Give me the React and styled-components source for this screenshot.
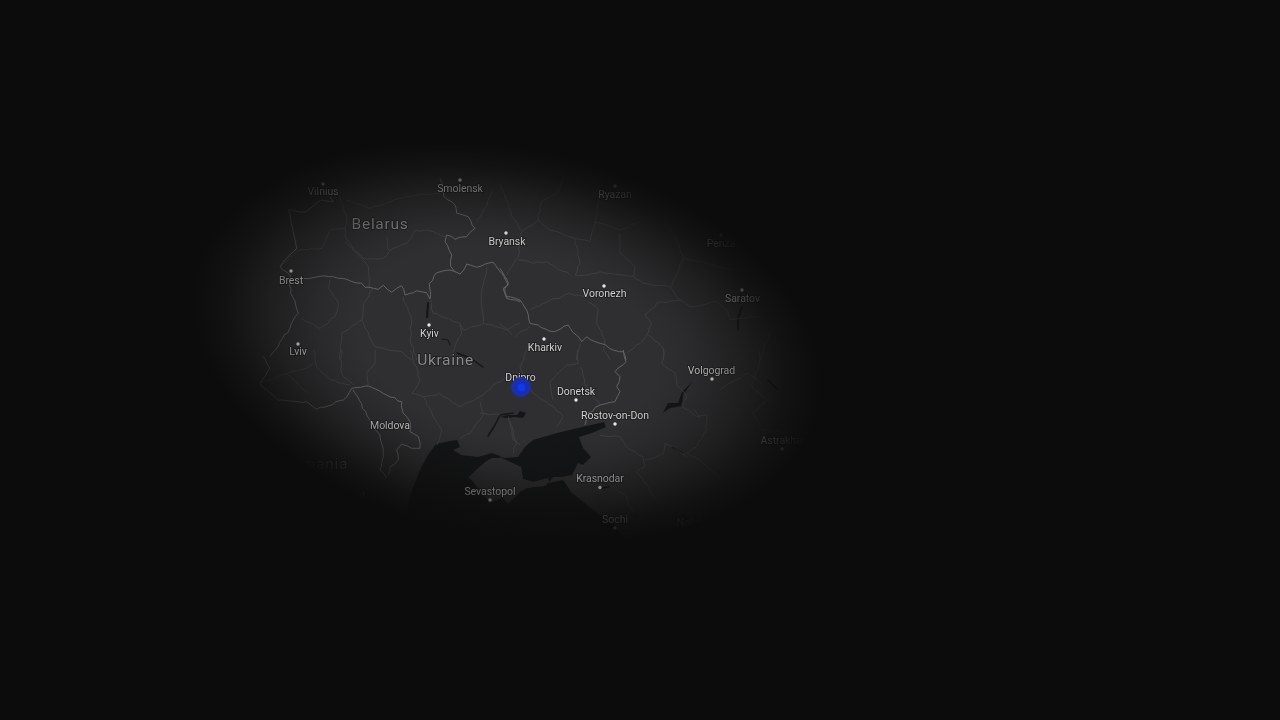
import React from "react";
import styled, { createGlobalStyle } from "styled-components";

const Global = createGlobalStyle`
  html, body { margin: 0; padding: 0; background: #0c0c0c; overflow: hidden; }
`;

const Stage = styled.main`
  position: relative;
  width: 1280px;
  height: 720px;
  overflow: hidden;
  background: #0c0c0c;
`;

const MapSvg = styled.svg`
  display: block;
  width: 1280px;
  height: 720px;
  filter: blur(0.5px);
`;

const Vignette = styled.div`
  position: absolute;
  left: -993px;
  top: -1157px;
  width: 3000px;
  height: 3000px;
  pointer-events: none;
  transform: rotate(12deg);
  background: radial-gradient(
    ellipse 318px 194px at 50% 50%,
    rgba(12, 12, 12, 0) 0%,
    rgba(12, 12, 12, 0) 48%,
    rgba(12, 12, 12, 0.14) 60%,
    rgba(12, 12, 12, 0.46) 75%,
    rgba(12, 12, 12, 0.82) 89%,
    rgba(12, 12, 12, 1) 100%
  );
`;

const Marker = styled.div`
  position: absolute;
  left: 511px;
  top: 377px;
  width: 20px;
  height: 20px;
  border-radius: 50%;
  background: #1a2eae;
  display: flex;
  align-items: center;
  justify-content: center;
`;

const MarkerCore = styled.div`
  width: 7px;
  height: 7px;
  border-radius: 50%;
  background: #0b3af2;
  box-shadow: 0 0 2px #0b3af2;
`;

const PlaceName = styled.text`
  font-family: "Roboto", "Liberation Sans", sans-serif;
  font-size: ${(p) => (p.$large ? 15.5 : 10.5)}px;
  letter-spacing: ${(p) => (p.$large ? 0.7 : -0.05)}px;
  fill: ${(p) => (p.$large ? "#8b8b8d" : "#d2d2d2")};
  text-anchor: middle;
  dominant-baseline: central;
  paint-order: stroke;
  stroke: rgba(20, 20, 22, 0.75);
  stroke-width: 1.5px;
`;

const PlaceDot = styled.circle`
  fill: #e8e8e8;
`;

const Land = styled.path`
  fill: #2f2f31;
`;

const Water = styled.path`
  fill: #141516;
`;

const WaterLine = styled.path`
  fill: none;
  stroke: #141516;
  stroke-width: ${(p) => p.$w || 2}px;
  stroke-linecap: round;
  stroke-linejoin: round;
`;

const Region = styled.path`
  fill: none;
  stroke: #3f3f41;
  stroke-width: 1px;
  stroke-linejoin: round;
`;

const Border = styled.path`
  fill: none;
  stroke: #636365;
  stroke-width: 1px;
  stroke-linejoin: round;
`;

// Deterministic wiggle so that the traced lines read as natural borders.
let seed = 7;
const rnd = () => {
  seed = (seed * 16807) % 2147483647;
  return seed / 2147483647 - 0.5;
};

const line = (pts, ox = 0, oy = 0) => {
  const out = [];
  pts.forEach(([x, y], i) => {
    const sx = ox + x / 3;
    const sy = oy + y / 3;
    if (i > 0) {
      const [px, py] = out[out.length - 1];
      const len = Math.hypot(sx - px, sy - py);
      const steps = Math.floor(len / 4);
      for (let s = 1; s < steps; s++) {
        const t = s / steps;
        out.push([px + (sx - px) * t + rnd() * 2, py + (sy - py) * t + rnd() * 2]);
      }
    }
    out.push([sx, sy]);
  });
  return "M" + out.map(([x, y]) => `${x.toFixed(1)} ${y.toFixed(1)}`).join("L");
};

const z1 = (p) => line(p, 220, 160);
const z2 = (p) => line(p, 500, 160);
const z3 = (p) => line(p, 220, 350);
const z4 = (p) => line(p, 500, 350);

const borders = [
  z1([[250,355],[285,352],[300,349],[340,350],[380,358],[405,368],[425,370],[435,382],[460,385],[475,388],[490,376],[515,397],[530,385],[545,377],[555,405],[590,392],[620,398],[630,417],[628,370],[650,338],[690,330],[720,342],[740,312],[770,322],[820,307],[845,340],[865,375],[850,385],[860,415],[900,425]]),
  z1([[660,55],[672,110],[705,135],[710,160],[745,170],[765,205],[740,230],[705,238],[680,225],[675,245],[695,285],[692,320],[705,335]]),
  z2([[0,325],[25,370],[15,385],[20,410],[60,420],[85,465],[90,490],[115,495],[160,515],[205,495],[245,545],[260,530],[300,550],[340,570],[370,575],[378,600]]),
  z4([[370,0],[378,35],[345,65],[360,80],[350,110],[360,125],[345,155],[300,165],[262,190],[255,225]]),
  z1([[205,150],[230,265],[200,295],[180,320],[210,345],[212,400],[235,460],[210,505],[150,590]]),
  z1([[205,150],[260,155],[305,120],[340,125],[330,110]]),
  z3([[120,100],[150,55],[130,20]]),
  z3([[120,100],[175,150],[260,155],[290,178],[370,150],[395,115],[445,108],[500,135],[545,155],[550,190],[570,215],[570,245],[595,260],[600,295]]),
  z3([[400,120],[440,195],[480,255],[490,310],[480,360],[500,385]]),
  z3([[600,295],[575,295],[545,282],[530,300],[535,330],[510,350],[505,375]]),
];

const regions = [
  z1([[355,100],[380,175],[375,230],[420,290],[445,320],[447,385]]),
  z1([[180,320],[240,270],[305,265],[330,210],[375,205]]),
  z1([[375,245],[430,295],[490,295],[510,270],[560,250],[585,210],[640,215],[675,230]]),
  z1([[500,230],[505,270]]),
  z1([[380,120],[450,145],[560,110],[660,100]]),
  z1([[820,85],[800,140],[770,180]]),
  z1([[330,358],[325,385],[355,430],[345,470],[300,505],[245,475]]),
  z1([[460,385],[430,430],[425,480],[365,520],[360,600]]),
  z1([[425,480],[465,560],[545,575],[575,600]]),
  z1([[550,410],[575,480],[570,540],[590,600]]),
  z1([[630,420],[640,460],[720,490],[730,510],[790,490],[860,510],[900,490]]),
  z1([[720,490],[725,520],[690,590]]),
  z1([[800,320],[785,410],[790,490]]),
  z2([[0,70],[40,175],[65,215],[115,180],[125,125],[180,90],[190,50]]),
  z2([[115,180],[150,210],[225,235],[270,245],[285,185],[360,210],[420,185]]),
  z2([[285,185],[300,110],[285,60]]),
  z2([[225,235],[240,310],[225,345],[265,345],[300,335],[400,350],[430,370],[510,380],[540,420],[570,440],[650,425],[680,450],[690,480],[770,470]]),
  z2([[65,215],[55,290],[20,345]]),
  z2([[55,300],[100,310],[140,305],[210,345]]),
  z2([[360,220],[360,280],[405,320],[400,350]]),
  z2([[515,380],[550,290],[530,240],[490,170]]),
  z2([[550,295],[620,310],[700,330]]),
  z2([[90,450],[130,430],[210,400],[255,410]]),
  z2([[265,425],[295,450],[290,490],[315,540],[310,570],[330,600]]),
  z2([[540,420],[470,430],[435,465],[455,490],[430,540],[380,580]]),
  z2([[0,490],[35,525]]),
  z2([[45,530],[90,500]]),
  z2([[240,550],[230,600]]),
  z2([[445,525],[490,565],[490,600]]),
  z2([[780,600],[805,530],[825,495]]),
  z3([[280,0],[290,50],[330,90],[390,105]]),
  z3([[365,0],[365,70],[400,105]]),
  z3([[465,0],[465,40],[440,70],[445,105]]),
  z3([[570,0],[600,90],[575,130],[610,140]]),
  z3([[610,140],[660,130],[720,170],[780,140],[830,100],[870,80]]),
  z3([[610,140],[640,200],[665,240],[650,285]]),
  z3([[780,155],[790,195],[750,250],[720,265]]),
  z3([[780,190],[840,195]]),
  z3([[870,215],[880,270],[900,285]]),
  z3([[205,75],[265,130]]),
  z3([[120,100],[205,70],[260,55],[280,40]]),
  z4([[80,0],[60,50],[100,130],[150,165],[190,200],[170,230]]),
  z4([[235,0],[235,40],[200,45],[150,95],[160,150]]),
  z4([[240,50],[260,110],[300,165]]),
  z4([[25,200],[50,280],[40,310]]),
  z4([[490,0],[485,40],[525,70],[530,105],[560,140],[545,165],[590,200],[620,195],[620,240],[590,290],[560,310],[600,330],[660,385]]),
  z4([[585,180],[600,205]]),
  z4([[300,255],[360,260],[385,295],[430,320],[435,350],[410,365],[445,410],[465,450]]),
  z4([[435,330],[490,310],[495,280],[530,300],[560,320]]),
  z4([[660,120],[700,95],[745,70],[785,100]]),
  z4([[755,110],[800,150],[760,190],[790,240],[890,250]]),
  z4([[755,110],[780,30],[775,0]]),
  z4([[350,420],[380,440],[400,490]]),
];

const places = [
  { n: "Vilnius", x: 323, y: 191, dx: 323, dy: 184 },
  { n: "Smolensk", x: 460, y: 188, dx: 460, dy: 180 },
  { n: "Ryazan", x: 615, y: 194, dx: 615, dy: 186 },
  { n: "Penza", x: 721, y: 243, dx: 721, dy: 235 },
  { n: "Bryansk", x: 507, y: 241, dx: 506, dy: 233 },
  { n: "Brest", x: 291, y: 280, dx: 291, dy: 271 },
  { n: "Voronezh", x: 604.5, y: 293.5, dx: 604, dy: 286 },
  { n: "Saratov", x: 742.5, y: 298, dx: 742, dy: 290 },
  { n: "Kyiv", x: 429.5, y: 333, dx: 429, dy: 325 },
  { n: "Kharkiv", x: 545, y: 347, dx: 544, dy: 339 },
  { n: "Lviv", x: 298, y: 351.5, dx: 298, dy: 344 },
  { n: "Dnipro", x: 520.5, y: 377.5 },
  { n: "Volgograd", x: 711.5, y: 370, dx: 712, dy: 379 },
  { n: "Donetsk", x: 576, y: 391, dx: 576, dy: 400 },
  { n: "Rostov-on-Don", x: 615, y: 415, dx: 615, dy: 424 },
  { n: "Moldova", x: 390, y: 425 },
  { n: "Krasnodar", x: 600, y: 478.5, dx: 600, dy: 487.5 },
  { n: "Sevastopol", x: 490, y: 491, dx: 490, dy: 500 },
  { n: "Sochi", x: 615, y: 519.5, dx: 615, dy: 528 },
  { n: "Astrakhan", x: 784, y: 440.5, dx: 782, dy: 449 },
  { n: "Nalchik", x: 694, y: 522 },
  { n: "Bucharest", x: 342, y: 495 },
];

const countries = [
  { n: "Belarus", x: 380, y: 223.5 },
  { n: "Ukraine", x: 445.5, y: 360 },
  { n: "Romania", x: 315, y: 464 },
];

const blackSea =
  "M428 455L436 444L450 441L457 440L460 447L453 450L461 455L478 457L492 453L500 456L500 470L470 478L490 503L520 490L549 483L563 480L572 493L597 513L615 525L640 560L640 720L380 720L400 540L412 490L420 470Z";
const azov =
  "M498 456L505 458L518 457L525 447L533 440L557 433L578 428L604 422L606 427L592 433L579 437L583 448L591 457L583 465L578 463L572 475L562 477L553 477L549 482L548 478L533 482L523 479L521 467L510 462Z";
const crimea =
  "M468 478L476 470L485 462L492 458L499 458L510 462L521 467L523 479L533 482L548 480L546 486L527 488L520 492L508 504L502 497L497 487L486 483Z";

export default function App() {
  return (
    <Stage>
      <Global />
      <MapSvg viewBox="0 0 1280 720" role="img" aria-label="Map of Ukraine and surrounding regions">
        <Land d="M0 0H1280V720H0Z" />
        <Water d={blackSea} />
        <Water d={azov} />
        <Land d={crimea} />
        <Water d="M663 413L668 403L678 403L682 392L692 382L683 395L682 406L670 408Z" />
        <WaterLine $w={2} d="M428 303L427 317" />
        <WaterLine $w={1} d="M442 339L448 340L450 345" />
        <WaterLine $w={1.5} d="M457 353L470 358L483 367" />
        <WaterLine $w={1.5} d="M488 436L495 425L500 415L513 413" />
        <Water d="M500 417L508 415L517 415L520 411L526 413L523 418L515 417L507 418Z" />
        <WaterLine $w={1.5} d="M742 307L738 318L738 330" />
        <WaterLine $w={1.5} d="M672 447L682 453" />
        <WaterLine $w={1.5} d="M768 380L777 389" />
        <WaterLine $w={1.5} d="M602 488L609 487" />
        {regions.map((d, i) => (
          <Region key={i} d={d} />
        ))}
        {borders.map((d, i) => (
          <Border key={i} d={d} />
        ))}
        {places.map((p) =>
          p.dx ? <PlaceDot key={p.n} cx={p.dx} cy={p.dy} r={1.7} /> : null
        )}
        {places.map((p) => (
          <PlaceName key={p.n} x={p.x} y={p.y}>
            {p.n}
          </PlaceName>
        ))}
        {countries.map((c) => (
          <PlaceName key={c.n} $large x={c.x} y={c.y}>
            {c.n}
          </PlaceName>
        ))}
      </MapSvg>
      <Vignette />
      <Marker>
        <MarkerCore />
      </Marker>
    </Stage>
  );
}
